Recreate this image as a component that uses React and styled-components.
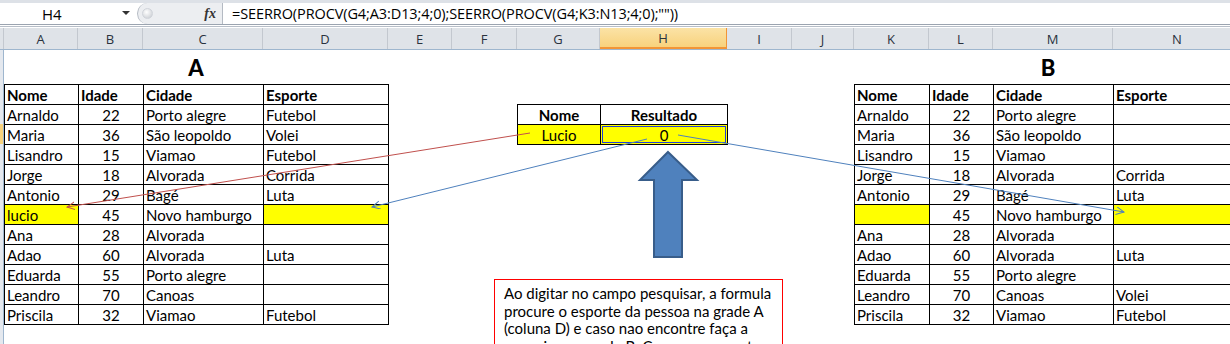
import React from 'react';
import styled, { createGlobalStyle } from 'styled-components';

const COLS = [
	{ key: 'A', w: 74 }, { key: 'B', w: 65 }, { key: 'C', w: 120 }, { key: 'D', w: 125 },
	{ key: 'E', w: 64 }, { key: 'F', w: 65 }, { key: 'G', w: 83 }, { key: 'H', w: 127 },
	{ key: 'I', w: 65 }, { key: 'J', w: 62 }, { key: 'K', w: 75 }, { key: 'L', w: 64 },
	{ key: 'M', w: 120 }, { key: 'N', w: 129 },
];
const sheetColumns = `4px ${COLS.map((c) => c.w + 'px').join(' ')}`;

const tableA = [
	['Arnaldo', '22', 'Porto alegre', 'Futebol'],
	['Maria', '36', 'São leopoldo', 'Volei'],
	['Lisandro', '15', 'Viamao', 'Futebol'],
	['Jorge', '18', 'Alvorada', 'Corrida'],
	['Antonio', '29', 'Bagé', 'Luta'],
	['lucio', '45', 'Novo hamburgo', ''],
	['Ana', '28', 'Alvorada', ''],
	['Adao', '60', 'Alvorada', 'Luta'],
	['Eduarda', '55', 'Porto alegre', ''],
	['Leandro', '70', 'Canoas', ''],
	['Priscila', '32', 'Viamao', 'Futebol'],
];

const tableB = [
	['Arnaldo', '22', 'Porto alegre', ''],
	['Maria', '36', 'São leopoldo', ''],
	['Lisandro', '15', 'Viamao', ''],
	['Jorge', '18', 'Alvorada', 'Corrida'],
	['Antonio', '29', 'Bagé', 'Luta'],
	['', '45', 'Novo hamburgo', ''],
	['Ana', '28', 'Alvorada', ''],
	['Adao', '60', 'Alvorada', 'Luta'],
	['Eduarda', '55', 'Porto alegre', ''],
	['Leandro', '70', 'Canoas', 'Volei'],
	['Priscila', '32', 'Viamao', 'Futebol'],
];

const GlobalStyle = createGlobalStyle`
	html, body {
		margin: 0;
		padding: 0;
		background: #fff;
	}
	body {
		font-family: Lato, "Liberation Sans", sans-serif;
		color: #000;
	}
`;

const Window = styled.div`
	position: relative;
	width: 1230px;
	height: 344px;
	overflow: hidden;
	background: #fff;
	display: flex;
	flex-direction: column;
`;

// barra de fórmulas
const FormulaBar = styled.div`
	height: 21px;
	display: flex;
	align-items: stretch;
	border-top: 3px solid #dde1e7;
	border-bottom: 1px solid #9ba4b0;
	box-shadow: 0 1px 0 #fff, 0 2px 0 #b7bec8;
	margin-bottom: 3px;
	background: #fff;
`;

const NameBox = styled.div`
	width: 137px;
	position: relative;
	display: flex;
	align-items: center;
	padding-left: 42px;
	box-sizing: border-box;
	font-family: "Open Sans", "Liberation Sans", sans-serif;
	font-size: 15px;
	& .caret {
		position: absolute;
		right: 7px;
		top: 8px;
		width: 0;
		height: 0;
		border-left: 4px solid transparent;
		border-right: 4px solid transparent;
		border-top: 4px solid #333;
	}
`;

const Grip = styled.div`
	width: 86px;
	display: flex;
	align-items: center;
	justify-content: space-between;
	background: #eceef1;
	border-left: 1px solid #b4bac3;
	border-right: 1px solid #b4bac3;
	border-radius: 12px 0 0 12px;
	padding: 0 6px 0 4px;
	box-sizing: border-box;
	& .knob {
		width: 9px;
		height: 9px;
		border-radius: 50%;
		background: radial-gradient(circle at 40% 35%, #fff, #c4c8ce);
		border: 1px solid #d0d4da;
	}
	& .fx {
		font-family: "Liberation Serif", serif;
		font-style: italic;
		font-weight: bold;
		font-size: 14px;
		color: #333;
	}
`;

const FormulaText = styled.div`
	flex: 1;
	display: flex;
	align-items: center;
	padding-left: 9px;
	font-family: "Open Sans", "Liberation Sans", sans-serif;
	font-size: 14.5px;
	letter-spacing: -0.1px;
	white-space: nowrap;
`;

// cabeçalhos de coluna
const HeaderRow = styled.div`
	display: grid;
	grid-template-columns: ${sheetColumns};
	height: 21px;
	border-bottom: 1px solid #9eb6ce;
	background: #dfe3e8;
`;

const ColHead = styled.div`
	display: flex;
	align-items: center;
	justify-content: center;
	box-sizing: border-box;
	border-right: 1px solid ${({ $active }) => ($active ? '#f29536' : '#c3c8cf')};
	border-bottom: ${({ $active }) => ($active ? '2px solid #f29536' : 'none')};
	background: ${({ $active }) => ($active ? 'linear-gradient(#fbe3a6, #f8d27d)' : 'transparent')};
	font-family: "Open Sans", "Liberation Sans", sans-serif;
	font-size: 13px;
	color: #29323d;
`;

// planilha
const Sheet = styled.div`
	display: grid;
	grid-template-columns: ${sheetColumns};
	grid-template-rows: 34px repeat(13, 20px);
`;

const RowHead = styled.div`
	grid-column: 1;
	grid-row: ${({ $row }) => $row};
	box-sizing: border-box;
	border-right: 1px solid #9eb6ce;
	background: ${({ $active }) => ($active ? '#f8d27d' : '#e4e8ee')};
`;

const Title = styled.div`
	grid-column: ${({ $col }) => $col} / span 4;
	grid-row: 1;
	display: flex;
	align-items: flex-end;
	justify-content: center;
	font-size: 22px;
	font-weight: 900;
	line-height: 28px;
	padding-bottom: 2px;
`;

const Table = styled.div`
	grid-column: ${({ $col }) => $col} / span ${({ $span }) => $span};
	grid-row: ${({ $row }) => $row} / span ${({ $rows }) => $rows};
	align-self: start;
	justify-self: start;
	display: grid;
	grid-template-columns: ${({ $widths }) => $widths};
	grid-auto-rows: 19px;
	gap: 1px;
	padding: 1px;
	background: #000;
`;

const Cell = styled.div`
	position: relative;
	background: ${({ $fill }) => $fill || '#fff'};
	font-size: 15px;
	line-height: 20px;
	font-weight: ${({ $bold }) => ($bold ? 700 : 400)};
	text-align: ${({ $align }) => $align || 'left'};
	padding: 0 2px;
	white-space: nowrap;
	overflow: hidden;
	&.selected::after {
		content: '';
		position: absolute;
		inset: 1px;
		border: 1px solid #1f3fd8;
	}
`;

const Note = styled.div`
	position: absolute;
	left: 494px;
	top: 279px;
	width: 289px;
	height: 110px;
	box-sizing: border-box;
	border: 1px solid #ff0000;
	background: #fff;
	padding: 5px 0 0 9px;
	font-size: 15px;
	line-height: 17.5px;
	& span {
		display: block;
		white-space: nowrap;
	}
`;

const Overlay = styled.svg`
	position: absolute;
	left: 0;
	top: 0;
	pointer-events: none;
`;

const yellow = '#ffff00';

function DataTable({ col, rows, widths, highlightRow, highlightCols }) {
	return (
		<Table $col={col} $span={4} $row={2} $rows={12} $widths={widths}>
			{['Nome', 'Idade', 'Cidade', 'Esporte'].map((h) => (
				<Cell key={h} $bold>{h}</Cell>
			))}
			{rows.map((r, i) =>
				r.map((v, j) => (
					<Cell
						key={i + '-' + j}
						$align={j === 1 ? 'center' : 'left'}
						$fill={i === highlightRow && highlightCols.includes(j) ? yellow : null}
					>
						{v}
					</Cell>
				))
			)}
		</Table>
	);
}

function App() {
	return (
		<Window>
			<GlobalStyle />
			<FormulaBar>
				<NameBox>
					H4
					<span className="caret" />
				</NameBox>
				<Grip>
					<span className="knob" />
					<span className="fx">fx</span>
				</Grip>
				<FormulaText>=SEERRO(PROCV(G4;A3:D13;4;0);SEERRO(PROCV(G4;K3:N13;4;0);""))</FormulaText>
			</FormulaBar>

			<HeaderRow>
				<ColHead />
				{COLS.map((c) => (
					<ColHead key={c.key} $active={c.key === 'H'}>{c.key}</ColHead>
				))}
			</HeaderRow>

			<Sheet>
				{Array.from({ length: 14 }).map((_, i) => (
					<RowHead key={i} $row={i + 1} $active={i === 3} />
				))}

				<Title $col={2}>A</Title>
				<Title $col={12}>B</Title>

				<DataTable col={2} rows={tableA} widths="73px 64px 119px 124px" highlightRow={5} highlightCols={[0, 3]} />

				<Table $col={8} $span={2} $row={3} $rows={2} $widths="82px 126px">
					<Cell $bold $align="center">Nome</Cell>
					<Cell $bold $align="center">Resultado</Cell>
					<Cell $align="center" $fill={yellow}>Lucio</Cell>
					<Cell $align="center" $fill={yellow} className="selected">0</Cell>
				</Table>

				<DataTable col={12} rows={tableB} widths="74px 63px 119px 128px" highlightRow={5} highlightCols={[0, 3]} />
			</Sheet>

			<Overlay width="1230" height="344" viewBox="0 0 1230 344">
				<defs>
					<marker id="openRed" markerWidth="10" markerHeight="10" refX="8" refY="4" orient="auto" markerUnits="userSpaceOnUse">
						<path d="M0,0 L8,4 L0,8" fill="none" stroke="#c0504d" strokeWidth="1" />
					</marker>
					<marker id="openBlue" markerWidth="10" markerHeight="10" refX="8" refY="4" orient="auto" markerUnits="userSpaceOnUse">
						<path d="M0,0 L8,4 L0,8" fill="none" stroke="#4f81bd" strokeWidth="1" />
					</marker>
				</defs>
				<line x1="530" y1="133" x2="67" y2="207" stroke="#c0504d" strokeWidth="1" markerEnd="url(#openRed)" />
				<line x1="647" y1="139" x2="372" y2="207" stroke="#4f81bd" strokeWidth="1" markerEnd="url(#openBlue)" />
				<line x1="678" y1="135" x2="1124" y2="212" stroke="#4f81bd" strokeWidth="1" markerEnd="url(#openBlue)" />
				<path
					d="M668,152 L697,180 L682,180 L682,257 L654,257 L654,180 L640,180 Z"
					fill="#4f81bd"
					stroke="#385d8a"
					strokeWidth="2"
					strokeLinejoin="miter"
				/>
			</Overlay>

			<Note>
				<span>Ao digitar no campo pesquisar, a formula</span>
				<span>procure o esporte da pessoa na grade A</span>
				<span>(coluna D) e caso nao encontre faça a</span>
				<span>pesquisa na grade B. Caso nao encontre</span>
			</Note>
		</Window>
	);
}

export default App;
